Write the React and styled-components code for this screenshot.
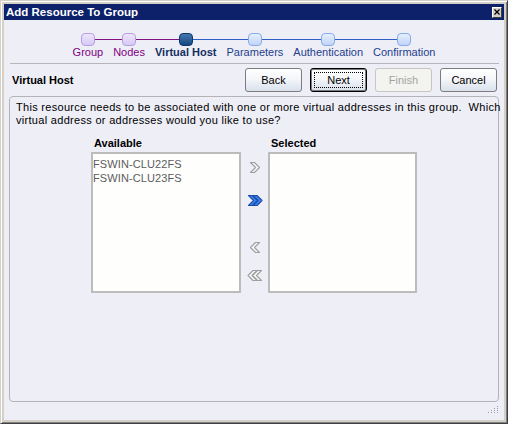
import React from 'react'
import styled, { createGlobalStyle } from 'styled-components'

const GlobalStyle = createGlobalStyle`
  html, body {
    margin: 0;
    padding: 0;
  }
  body {
    font-family: "Liberation Sans", Arial, sans-serif;
    font-size: 11px;
    color: #000;
    background: #d4d0c8;
  }
`

const Window = styled.div`
  width: 508px;
  height: 424px;
  box-sizing: border-box;
  display: flex;
  flex-direction: column;
  padding: 3px;
  background: #d4d0c8;
  border: 1px solid;
  border-color: #d4d0c8 #404040 #404040 #d4d0c8;
  box-shadow: inset 1px 1px #ffffff, inset -1px -1px #808080;
`

const TitleBar = styled.div`
  flex: none;
  height: 16px;
  display: flex;
  align-items: center;
  justify-content: space-between;
  padding: 0 2px 0 2px;
  background: #0c2169;
  color: #fff;
  font-size: 11.5px;
  font-weight: bold;
`

const CloseBox = styled.div`
  width: 10px;
  height: 11px;
  box-sizing: border-box;
  display: flex;
  align-items: center;
  justify-content: center;
  background: #d4d0c8;
  border: 1px solid;
  border-color: #ffffff #404040 #404040 #ffffff;
`

const Body = styled.div`
  flex: 1;
  display: flex;
  flex-direction: column;
  padding: 0 5px;
  background: #eeeef7;
`

const Stepper = styled.div`
  display: flex;
  justify-content: center;
  margin-top: 13px;
`

const purple = '#82127f'
const blue = '#2f5fc4'

const Step = styled.div`
  position: relative;
  display: flex;
  flex-direction: column;
  align-items: center;
  padding: 0 5px;

  &::before,
  &::after {
    content: '';
    position: absolute;
    top: 6px;
    height: 1px;
  }
  &::before {
    left: 0;
    right: 50%;
    display: ${p => (p.$first ? 'none' : 'block')};
    background: ${p => (p.$state === 'todo' ? blue : purple)};
  }
  &::after {
    left: 50%;
    right: 0;
    display: ${p => (p.$last ? 'none' : 'block')};
    background: ${p => (p.$state === 'done' ? purple : blue)};
  }
`

const nodeLook = {
  done: 'border-color: #b79fe2; background: linear-gradient(#eee7fc, #d6c8f4);',
  current: 'border-color: #0f3466; background: linear-gradient(#4377b0, #16497f);',
  todo: 'border-color: #88ace8; background: linear-gradient(#e6effd, #c0d5f7);',
}

const Node = styled.div`
  position: relative;
  z-index: 1;
  width: 14px;
  height: 13px;
  box-sizing: border-box;
  border: 1px solid;
  border-radius: 4px;
  ${p => nodeLook[p.$state]}
`

const StepLabel = styled.div`
  line-height: 13px;
  white-space: nowrap;
  color: ${p => (p.$state === 'done' ? '#800080' : p.$state === 'current' ? '#14305f' : '#1e3f8c')};
  font-weight: ${p => (p.$state === 'current' ? 'bold' : 'normal')};
`

const Rule = styled.div`
  height: 1px;
  margin: 4px 0 0 1px;
  background: #b5b5bb;
`

const Header = styled.div`
  display: flex;
  align-items: center;
  height: 24px;
  margin-top: 4px;
`

const PageTitle = styled.div`
  padding-left: 3px;
  font-weight: bold;
`

const Buttons = styled.div`
  display: flex;
  gap: 8px;
  margin-left: auto;
  margin-right: 2px;
`

const Button = styled.button`
  position: relative;
  width: 57px;
  height: 24px;
  box-sizing: border-box;
  padding: 0;
  font-family: inherit;
  font-size: 11px;
  color: ${p => (p.disabled ? '#a3a3a3' : '#000')};
  border: 1px solid ${p => (p.$primary ? '#000' : p.disabled ? '#c7c6c0' : '#7b7b80')};
  border-radius: 3px;
  background: ${p => (p.disabled ? '#f3f3ef' : 'linear-gradient(#ffffff 0%, #f4f6f9 45%, #d9e1ec 100%)')};
  box-shadow: ${p => (p.$primary ? 'inset 0 0 0 1px #7b7b80' : 'none')};

  &::after {
    content: '';
    display: ${p => (p.$primary ? 'block' : 'none')};
    position: absolute;
    inset: 3px;
    border: 1px dotted #000;
  }
`

const Panel = styled.div`
  flex: 1;
  margin-top: 4px;
  padding: 4px 0 0 6px;
  border: 1px solid #b3b3b8;
  border-radius: 4px;
`

const Intro = styled.div`
  line-height: 13px;
  letter-spacing: 0.3px;
  white-space: pre;
`

const Picker = styled.div`
  display: grid;
  grid-template-columns: 150px 27px 149px;
  justify-content: center;
  margin: 9px 6px 0 0;
`

const ColumnLabel = styled.div`
  padding-left: 3px;
  margin-bottom: 2px;
  line-height: 14px;
  font-weight: bold;
`

const ListBox = styled.div`
  height: 141px;
  box-sizing: border-box;
  padding: 3px 0 0 0;
  border: 2px solid #bcbcbc;
  background: #fefefc;
`

const Item = styled.div`
  line-height: 14px;
  color: #5c5c5c;
  letter-spacing: 0.1px;
`

const Arrows = styled.div`
  display: flex;
  flex-direction: column;
  align-items: center;
`

const ArrowButton = styled.div`
  width: 16px;
  height: 13px;
  margin-top: ${p => p.$top}px;
  svg { display: block; }
`

const Footer = styled.div`
  flex: none;
  height: 18px;
  display: flex;
  justify-content: flex-end;
  align-items: flex-start;
  padding: 4px 1px 0 0;
  box-sizing: border-box;
`

const Chevron = ({ double, left, active }) => {
  const fill = active ? '#3b86ee' : '#f6f6f6'
  const stroke = active ? '#1a4ca6' : '#9e9e9e'
  const one = x => `${x},1.5 ${x + 4},1.5 ${x + 9},6.5 ${x + 4},11.5 ${x},11.5 ${x + 5},6.5`
  return (
    <svg width="16" height="13" viewBox="0 0 16 13">
      <g transform={left ? 'translate(16,0) scale(-1,1)' : undefined} fill={fill} stroke={stroke} strokeWidth="1.1" strokeLinejoin="round">
        {double ? (
          <>
            <polygon points={one(1.5)} />
            <polygon points={one(6)} />
          </>
        ) : (
          <polygon points={one(3.5)} />
        )}
      </g>
    </svg>
  )
}

const Grip = () => {
  const dots = []
  for (let r = 0; r < 4; r++) {
    for (let c = 0; c <= r; c++) {
      dots.push(<rect key={`${r}-${c}`} x={9 - c * 3} y={r * 2} width="1" height="1" fill="#9a9aa0" />)
    }
  }
  return (
    <svg width="10" height="7" viewBox="0 0 10 7">
      {dots}
    </svg>
  )
}

const steps = [
  { name: 'Group', state: 'done' },
  { name: 'Nodes', state: 'done' },
  { name: 'Virtual Host', state: 'current' },
  { name: 'Parameters', state: 'todo' },
  { name: 'Authentication', state: 'todo' },
  { name: 'Confirmation', state: 'todo' },
]

const available = ['FSWIN-CLU22FS', 'FSWIN-CLU23FS']

const App = () => (
  <>
    <GlobalStyle />
    <Window>
      <TitleBar>
        <span>Add Resource To Group</span>
        <CloseBox>
          <svg width="6" height="6" viewBox="0 0 6 6">
            <path d="M0.5 0.5 L5.5 5.5 M5.5 0.5 L0.5 5.5" stroke="#000" strokeWidth="1.3" />
          </svg>
        </CloseBox>
      </TitleBar>

      <Body>
        <Stepper>
          {steps.map((s, i) => (
            <Step key={s.name} $state={s.state} $first={i === 0} $last={i === steps.length - 1}>
              <Node $state={s.state} />
              <StepLabel $state={s.state}>{s.name}</StepLabel>
            </Step>
          ))}
        </Stepper>

        <Rule />

        <Header>
          <PageTitle>Virtual Host</PageTitle>
          <Buttons>
            <Button>Back</Button>
            <Button $primary>Next</Button>
            <Button disabled>Finish</Button>
            <Button>Cancel</Button>
          </Buttons>
        </Header>

        <Panel>
          <Intro>
            {'This resource needs to be associated with one or more virtual addresses in this group.  Which\nvirtual address or addresses would you like to use?'}
          </Intro>

          <Picker>
            <ColumnLabel>Available</ColumnLabel>
            <div />
            <ColumnLabel>Selected</ColumnLabel>

            <ListBox>
              {available.map(a => (
                <Item key={a}>{a}</Item>
              ))}
            </ListBox>
            <Arrows>
              <ArrowButton $top={9}><Chevron /></ArrowButton>
              <ArrowButton $top={20}><Chevron double active /></ArrowButton>
              <ArrowButton $top={34}><Chevron left /></ArrowButton>
              <ArrowButton $top={15}><Chevron double left /></ArrowButton>
            </Arrows>
            <ListBox />
          </Picker>
        </Panel>

        <Footer>
          <Grip />
        </Footer>
      </Body>
    </Window>
  </>
)

export default App
